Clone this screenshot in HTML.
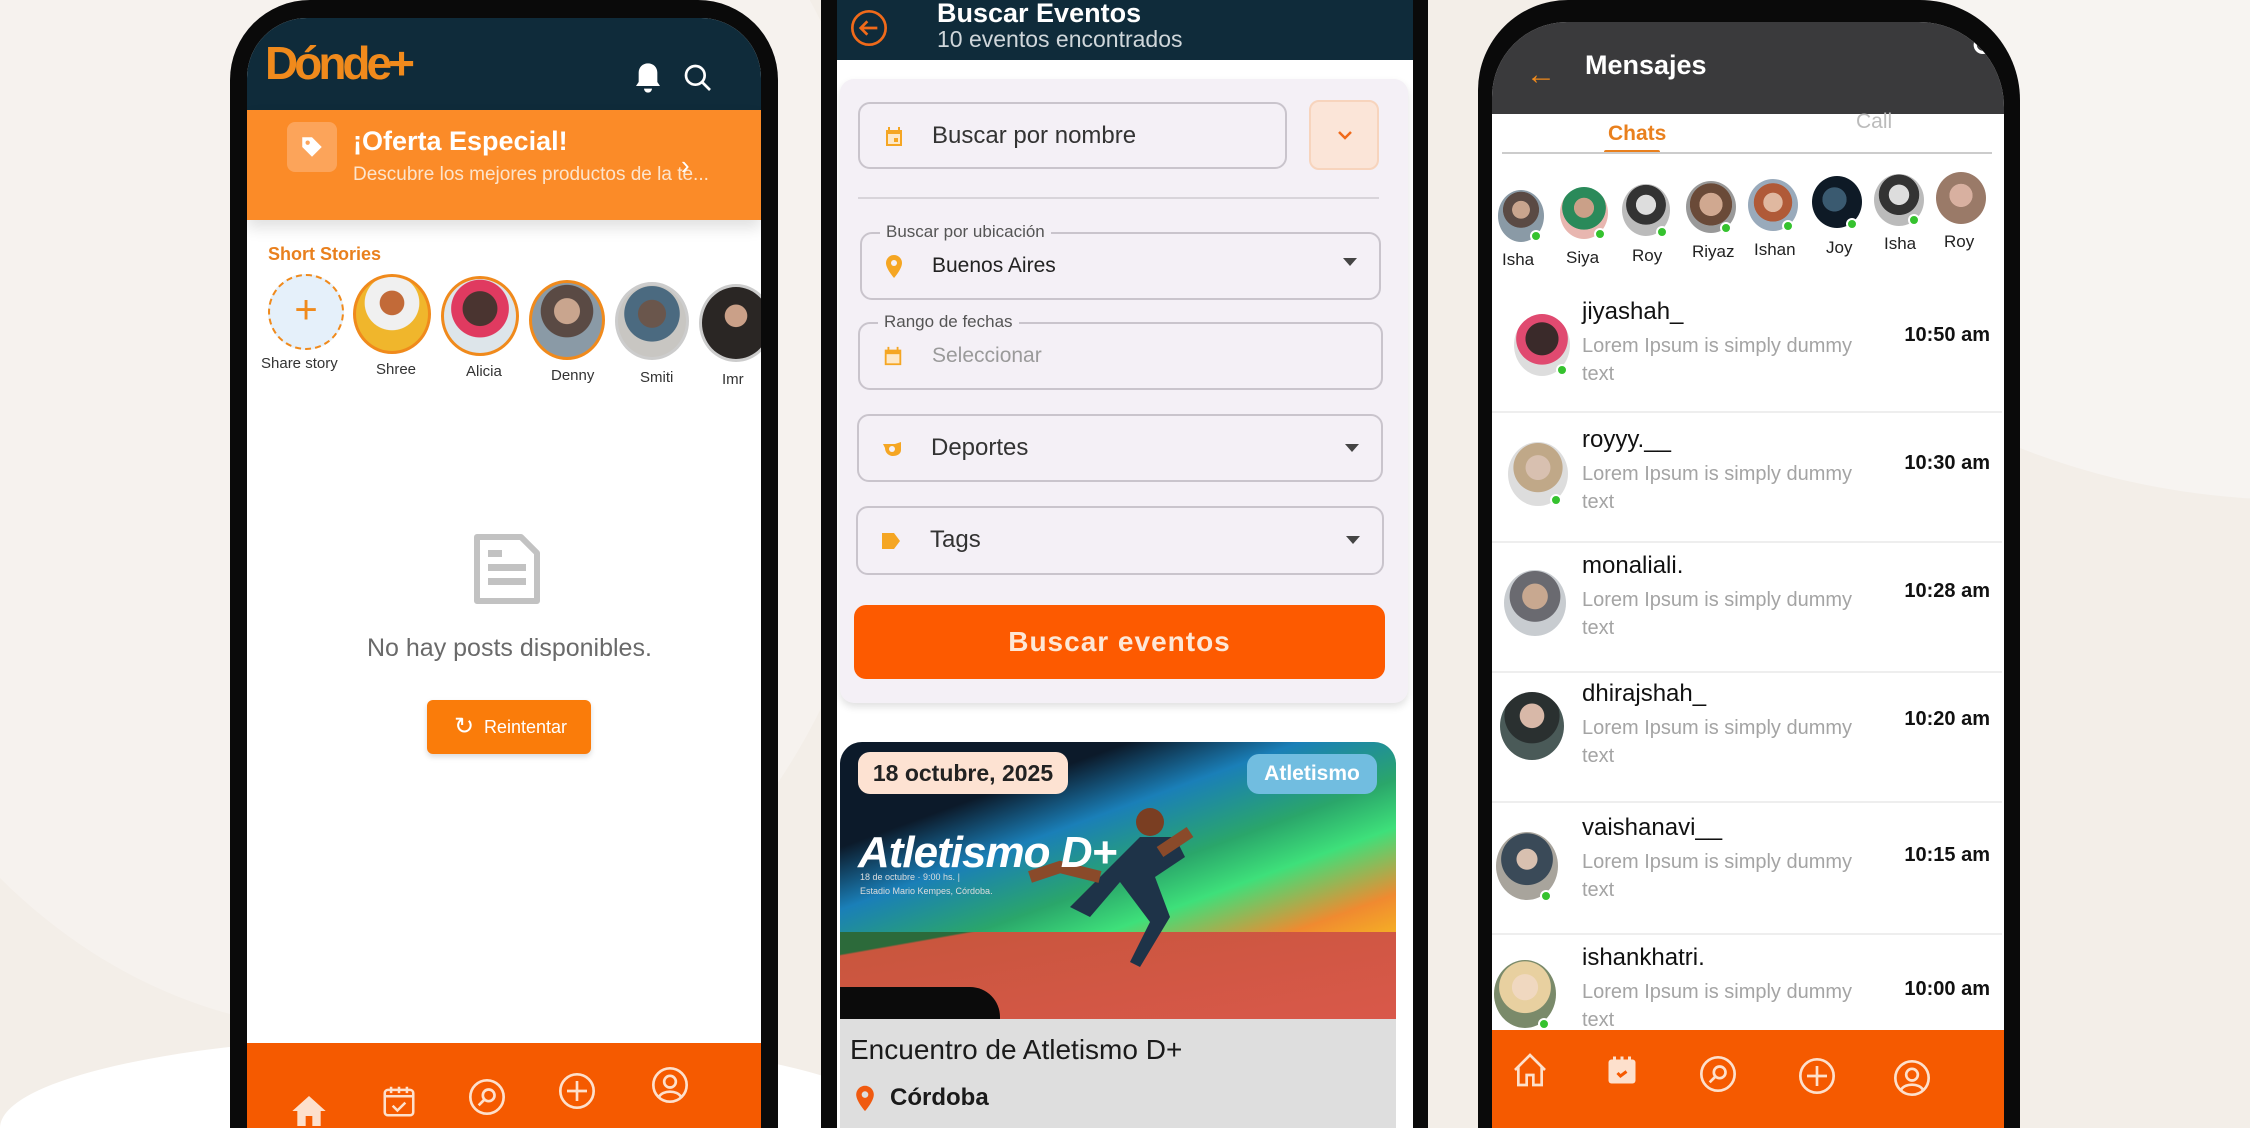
<!DOCTYPE html>
<html><head><meta charset="utf-8">
<style>
*{margin:0;padding:0;box-sizing:border-box}
html,body{width:2250px;height:1128px;overflow:hidden}
body{font-family:"Liberation Sans",sans-serif;background:#f3eee8}
#w{position:relative;width:2250px;height:1128px;overflow:hidden;background:#f3eee8}
.a{position:absolute}
.bg1{left:-200px;top:-300px;width:1100px;height:1330px;border-radius:50%;background:#f6f2ee}
.bg1c{left:0;top:0;width:900px;height:1030px;overflow:hidden}
.bg2{left:0;top:1035px;width:900px;height:93px;background:#fff;border-radius:50% 50% 0 0/100% 100% 0 0}
.bg3w{left:1700px;top:0;width:550px;height:500px;overflow:hidden}
.bg3{left:0;top:-400px;width:1200px;height:900px;border-radius:50%;background:#f7f4f1}
.frame{background:#0a0a0a}
.scr{background:#fff;overflow:hidden}
.av{border-radius:50%;background:radial-gradient(circle at 50% 38%,#c9a58e 0 22%,#5a4a44 23% 45%,#8a9aa6 46%)}
.dot{position:absolute;width:12px;height:12px;border-radius:50%;background:#35c22e;border:2px solid #fff}
.fld{position:absolute;border:2px solid #c9c4cc;border-radius:12px}
.lbl{position:absolute;top:-12px;left:18px;background:#f4f0f6;padding:0 6px;font-size:17px;color:#555}
.chat{position:absolute;left:0;width:510px;height:129px;border-bottom:2px solid #eee}
.cn{position:absolute;left:90px;font-size:24px;color:#111}
.cm{position:absolute;left:90px;font-size:20px;color:#a4a4a4;line-height:28px;width:300px}
.ct{position:absolute;right:12px;font-size:20px;font-weight:bold;color:#111}
.nav svg{position:absolute}
</style></head><body><div id="w">
<div class="a bg1c"><div class="a bg1"></div></div><div class="a bg3w"><div class="a bg3"></div></div><div class="a bg2"></div>

<!-- PHONE 1 -->
<div class="a frame" style="left:230px;top:0;width:548px;height:1128px;border-radius:80px 80px 0 0"></div>
<div class="a scr" style="left:247px;top:18px;width:514px;height:1110px;border-radius:60px 60px 0 0">
  <div class="a" style="left:0;top:0;width:514px;height:92px;background:#0f2b3a"></div>
  <div class="a" style="left:18px;top:18px;font-size:46px;font-weight:bold;color:#f08a1c;letter-spacing:-4px">Dónde+</div>
  <svg class="a" style="left:385px;top:42px" width="32" height="36" viewBox="0 0 24 26"><path d="M12 2c-4 0-7 3-7 7v7l-2 3h18l-2-3V9c0-4-3-7-7-7zM9 21a3 3 0 006 0z" fill="#fff"/></svg>
  <svg class="a" style="left:435px;top:44px" width="32" height="32" viewBox="0 0 24 24"><circle cx="10" cy="10" r="7" fill="none" stroke="#fff" stroke-width="2"/><path d="M15 15l6 6" stroke="#fff" stroke-width="2"/></svg>
  <div class="a" style="left:0;top:92px;width:514px;height:110px;background:#fb8b28;box-shadow:0 8px 14px rgba(0,0,0,.12)"></div>
  <div class="a" style="left:40px;top:104px;width:50px;height:50px;border-radius:8px;background:#fca45a"></div>
  <svg class="a" style="left:52px;top:116px" width="26" height="26" viewBox="0 0 24 24"><path d="M3 3h9l9 9-9 9-9-9z" fill="#fff"/><circle cx="8" cy="8" r="2" fill="#fca45a"/></svg>
  <div class="a" style="left:106px;top:108px;font-size:27px;font-weight:bold;color:#fff">¡Oferta Especial!</div>
  <div class="a" style="left:106px;top:146px;font-size:19px;color:#fde4cc;white-space:nowrap">Descubre los mejores productos de la te...</div>
  <div class="a" style="left:434px;top:132px;font-size:26px;color:#fff">›</div>
  <div class="a" style="left:21px;top:226px;font-size:18px;font-weight:bold;color:#e9801e">Short Stories</div>
  <div class="a" style="left:21px;top:256px;width:76px;height:76px;border-radius:50%;background:#e5f0fa;border:2px dashed #f08a1c;color:#f08a1c;font-size:40px;text-align:center;line-height:68px">+</div>
  <div class="a" style="left:14px;top:337px;font-size:15px;color:#333">Share story</div>
  <div class="a av" style="left:106px;top:256px;width:78px;height:80px;border:3px solid #f08a1c;background:radial-gradient(circle at 50% 35%,#c26a38 0 20%,#f0f0f0 21% 45%,#f0b62c 46%)"></div>
  <div class="a" style="left:129px;top:343px;font-size:15px;color:#333">Shree</div>
  <div class="a av" style="left:194px;top:258px;width:78px;height:80px;border:3px solid #f08a1c;background:radial-gradient(circle at 50% 40%,#4a3430 0 30%,#e03a60 31% 50%,#dde5ea 51%)"></div>
  <div class="a" style="left:219px;top:345px;font-size:15px;color:#333">Alicia</div>
  <div class="a av" style="left:282px;top:262px;width:76px;height:80px;border:3px solid #f08a1c"></div>
  <div class="a" style="left:304px;top:349px;font-size:15px;color:#333">Denny</div>
  <div class="a av" style="left:368px;top:264px;width:74px;height:78px;border:3px solid #ccc;background:radial-gradient(circle at 50% 40%,#6a564c 0 25%,#4b6a80 26% 50%,#c8c6c2 51%)"></div>
  <div class="a" style="left:393px;top:351px;font-size:15px;color:#333">Smiti</div>
  <div class="a av" style="left:452px;top:266px;width:74px;height:78px;border:3px solid #ccc;background:radial-gradient(circle at 50% 40%,#caa088 0 20%,#2a2624 21%)"></div>
  <div class="a" style="left:475px;top:353px;font-size:15px;color:#333">Imr</div>
  <svg class="a" style="left:227px;top:516px" width="66" height="70" viewBox="0 0 66 70"><path d="M3 3h44l16 16v48H3z" fill="none" stroke="#c2c2c2" stroke-width="6" stroke-linejoin="round"/><rect x="14" y="16" width="14" height="7" fill="#c2c2c2"/><rect x="14" y="30" width="38" height="7" fill="#c2c2c2"/><rect x="14" y="44" width="38" height="7" fill="#c2c2c2"/></svg>
  <div class="a" style="left:120px;top:616px;font-size:25px;color:#6a6a6a">No hay posts disponibles.</div>
  <div class="a" style="left:180px;top:682px;width:164px;height:54px;border-radius:6px;background:#fa7c0a;color:#fff;font-size:18px;line-height:54px;text-align:right;padding-right:24px;box-shadow:0 3px 6px rgba(0,0,0,.15)">Reintentar</div>
  <div class="a" style="left:207px;top:694px;font-size:24px;color:#fff">↻</div>
  <div class="a nav" style="left:0;top:1025px;width:514px;height:85px;background:#f55a00">
    <svg style="left:42px;top:48px" width="40" height="40" viewBox="0 0 24 24"><path d="M12 3L2 12h3v9h5v-6h4v6h5v-9h3z" fill="#fde0cc"/></svg>
    <svg style="left:133px;top:38px" width="38" height="40" viewBox="0 0 24 24" fill="none" stroke="#fde0cc" stroke-width="1.6"><rect x="3" y="5" width="18" height="16" rx="2"/><path d="M3 9h18M7 3v4M12 3v4M17 3v4M8 15l3 3 5-5"/></svg>
    <svg style="left:220px;top:34px" width="40" height="40" viewBox="0 0 24 24" fill="none" stroke="#fde0cc" stroke-width="1.6"><circle cx="12" cy="12" r="10"/><circle cx="13" cy="11" r="3.5"/><path d="M10.5 13.5L7 17"/></svg>
    <svg style="left:310px;top:28px" width="40" height="40" viewBox="0 0 24 24" fill="none" stroke="#fde0cc" stroke-width="1.6"><circle cx="12" cy="12" r="10"/><path d="M12 6v12M6 12h12"/></svg>
    <svg style="left:403px;top:22px" width="40" height="40" viewBox="0 0 24 24" fill="none" stroke="#fde0cc" stroke-width="1.6"><circle cx="12" cy="12" r="10"/><circle cx="12" cy="10" r="3.5"/><path d="M5.5 19c2-4 11-4 13 0"/></svg>
  </div>
</div>

<!-- PHONE 2 -->
<div class="a frame" style="left:821px;top:0;width:607px;height:1128px"></div>
<div class="a scr" style="left:837px;top:0;width:576px;height:1128px;background:#fff">
 <div class="a" style="left:0;top:-40px;width:576px;height:1168px">
  <div class="a" style="left:0;top:0;width:576px;height:100px;background:#0f2b3a"></div>
  <svg class="a" style="left:12px;top:48px" width="40" height="40" viewBox="0 0 24 24" fill="none" stroke="#f06a1a" stroke-width="1.6"><circle cx="12" cy="12" r="10"/><path d="M17 12H7M11 8l-4 4 4 4"/></svg>
  <div class="a" style="left:100px;top:38px;font-size:27px;font-weight:bold;color:#fff">Buscar Eventos</div>
  <div class="a" style="left:100px;top:66px;font-size:23px;color:#cfd6da">10 eventos encontrados</div>
  <div class="a" style="left:3px;top:119px;width:568px;height:624px;border-radius:14px;background:#f4f0f6;box-shadow:0 4px 8px rgba(0,0,0,.12)">
    <div class="fld" style="left:18px;top:23px;width:429px;height:67px"><svg class="a" style="left:22px;top:20px" width="24" height="26" viewBox="0 0 24 24"><path d="M4 5h16v16H4z" fill="#f5a623"/><rect x="6" y="9" width="12" height="10" fill="#fde8c8"/><rect x="12" y="13" width="4" height="4" fill="#f5a623"/><path d="M7 2v4M17 2v4" stroke="#f5a623" stroke-width="2"/></svg><div class="a" style="left:72px;top:18px;font-size:24px;color:#333">Buscar por nombre</div></div>
    <div class="a" style="left:469px;top:21px;width:70px;height:70px;border-radius:10px;background:#fbe5d8;border:2px solid #f7d4bd"><svg class="a" style="left:24px;top:26px" width="20" height="14" viewBox="0 0 20 14"><path d="M4 4l6 6 6-6" fill="none" stroke="#f06a1a" stroke-width="2.5"/></svg></div>
    <div class="a" style="left:18px;top:118px;width:521px;height:2px;background:#d8d4da"></div>
    <div class="fld" style="left:20px;top:153px;width:521px;height:68px"><div class="lbl">Buscar por ubicación</div><svg class="a" style="left:22px;top:20px" width="20" height="26" viewBox="0 0 20 26"><path d="M10 1a8 8 0 00-8 8c0 6 8 15 8 15s8-9 8-15a8 8 0 00-8-8z" fill="#f5a623"/><circle cx="10" cy="9" r="3" fill="#f4f0f6"/></svg><div class="a" style="left:70px;top:20px;font-size:21px;color:#222">Buenos Aires</div><div class="a" style="right:22px;top:24px;border:7px solid transparent;border-top:8px solid #444"></div></div>
    <div class="fld" style="left:18px;top:243px;width:525px;height:68px"><div class="lbl">Rango de fechas</div><svg class="a" style="left:22px;top:20px" width="22" height="24" viewBox="0 0 24 24"><path d="M3 5h18v17H3z" fill="#f5a623"/><rect x="5" y="10" width="14" height="10" fill="#fde8c8"/><path d="M7 2v4M17 2v4" stroke="#f5a623" stroke-width="2"/></svg><div class="a" style="left:72px;top:20px;font-size:21px;color:#9a9a9a">Seleccionar</div></div>
    <div class="fld" style="left:17px;top:335px;width:526px;height:68px"><svg class="a" style="left:22px;top:24px" width="24" height="18" viewBox="0 0 24 18"><path d="M2 4h12l6-2v8c0 4-4 6-8 6-5 0-8-4-8-8z" fill="#f5a623"/><circle cx="11" cy="9" r="3" fill="#f4f0f6"/></svg><div class="a" style="left:72px;top:18px;font-size:24px;color:#333">Deportes</div><div class="a" style="right:22px;top:28px;border:7px solid transparent;border-top:8px solid #444"></div></div>
    <div class="fld" style="left:16px;top:427px;width:528px;height:69px"><svg class="a" style="left:22px;top:22px" width="22" height="22" viewBox="0 0 22 22"><path d="M2 3h12l6 8-6 8H2z" fill="#f5a623"/></svg><div class="a" style="left:72px;top:18px;font-size:24px;color:#333">Tags</div><div class="a" style="right:22px;top:28px;border:7px solid transparent;border-top:8px solid #444"></div></div>
    <div class="a" style="left:14px;top:526px;width:531px;height:74px;border-radius:12px;background:#fd5a00;color:#fde7d6;font-size:28px;font-weight:bold;text-align:center;line-height:74px;letter-spacing:1px">Buscar eventos</div>
  </div>
  <div class="a" style="left:3px;top:782px;width:556px;height:386px;border-radius:22px 22px 0 0;overflow:hidden;background:#dedede">
    <div class="a" style="left:0;top:0;width:556px;height:277px;background:linear-gradient(160deg,#0c1a2a 0%,#0c1a2a 22%,#1a7fb8 35%,#2aa66a 50%,#3ee07a 60%,#f08a30 74%,#f7c020 86%)"></div>
    <div class="a" style="left:0;top:190px;width:556px;height:87px;background:linear-gradient(170deg,#2c6a3a 0 12%,#c9563e 13%,#d9584a 100%)"></div>
    <div class="a" style="left:0;top:245px;width:160px;height:32px;background:#0b0b0b;border-radius:0 30px 0 0"></div>
    <svg class="a" style="left:160px;top:50px" width="220" height="200" viewBox="0 0 220 200"><circle cx="150" cy="30" r="14" fill="#7a3e22"/><path d="M140 45l-40 40-30 30 20 10 30-35 30 40-20 40 10 5 30-50-15-40 30-20-10-20z" fill="#1e3348"/><path d="M100 85l-40-10-30 10M160 60l30-20" stroke="#8a4a2a" stroke-width="12" fill="none"/></svg>
    <div class="a" style="left:20px;top:128px;font-size:9px;color:#ddd;line-height:14px">18 de octubre · 9:00 hs. |<br>Estadio Mario Kempes, Córdoba.</div>
    <div class="a" style="left:18px;top:86px;font-size:44px;font-weight:bold;font-style:italic;color:#fff;letter-spacing:-1px">Atletismo D+</div>
    <div class="a" style="left:18px;top:10px;width:210px;height:42px;border-radius:12px;background:#fde2d2;font-size:23px;font-weight:bold;color:#222;line-height:42px;text-align:center">18 octubre, 2025</div>
    <div class="a" style="left:407px;top:12px;width:130px;height:40px;border-radius:12px;background:#71bde0;font-size:21px;font-weight:bold;color:#fff;line-height:40px;text-align:center">Atletismo</div>
    <div class="a" style="left:10px;top:292px;font-size:28px;color:#1a1a1a">Encuentro de Atletismo D+</div>
    <svg class="a" style="left:14px;top:342px" width="22" height="30" viewBox="0 0 20 26"><path d="M10 1a8 8 0 00-8 8c0 6 8 15 8 15s8-9 8-15a8 8 0 00-8-8z" fill="#f05a10"/><circle cx="10" cy="9" r="3" fill="#dedede"/></svg>
    <div class="a" style="left:50px;top:342px;font-size:24px;font-weight:bold;color:#1a1a1a">Córdoba</div>
  </div>
 </div>
</div>

<!-- PHONE 3 -->
<div class="a frame" style="left:1478px;top:0;width:542px;height:1128px;border-radius:90px 100px 0 0"></div>
<div class="a scr" style="left:1492px;top:22px;width:512px;height:1106px;border-radius:75px 85px 0 0">
  <div class="a" style="left:0;top:0;width:512px;height:92px;background:#3a3a3c"></div>
  <div class="a" style="left:34px;top:36px;font-size:30px;color:#f08a1c">←</div>
  <div class="a" style="left:93px;top:28px;font-size:27px;font-weight:bold;color:#fff">Mensajes</div>
  <svg class="a" style="left:480px;top:12px" width="26" height="26" viewBox="0 0 24 24"><circle cx="10" cy="10" r="7" fill="none" stroke="#fff" stroke-width="3"/></svg>
  <div class="a" style="left:116px;top:100px;font-size:21px;font-weight:bold;color:#e9801e">Chats</div>
  <div class="a" style="left:112px;top:128px;width:56px;height:4px;border-radius:2px;background:#e9801e"></div>
  <div class="a" style="left:364px;top:88px;font-size:21px;color:#bbb">Call</div>
  <div class="a" style="left:10px;top:130px;width:490px;height:2px;background:#ccc"></div>
  <div class="a av" style="left:6px;top:168px;width:46px;height:52px"></div><div class="dot" style="left:38px;top:208px"></div><div class="a" style="left:10px;top:228px;font-size:17px;color:#222">Isha</div>
  <div class="a av" style="left:68px;top:165px;width:48px;height:52px;background:radial-gradient(circle at 50% 40%,#caa088 0 25%,#2a8a5a 26% 55%,#e8b6b0 56%)"></div><div class="dot" style="left:102px;top:206px"></div><div class="a" style="left:74px;top:226px;font-size:17px;color:#222">Siya</div>
  <div class="a av" style="left:130px;top:162px;width:48px;height:52px;background:radial-gradient(circle at 50% 40%,#ddd 0 25%,#333 26% 50%,#bbb 51%)"></div><div class="dot" style="left:164px;top:204px"></div><div class="a" style="left:140px;top:224px;font-size:17px;color:#222">Roy</div>
  <div class="a av" style="left:194px;top:159px;width:50px;height:52px;background:radial-gradient(circle at 50% 45%,#d0a890 0 30%,#6a4a38 31% 55%,#999 56%)"></div><div class="dot" style="left:228px;top:200px"></div><div class="a" style="left:200px;top:220px;font-size:17px;color:#222">Riyaz</div>
  <div class="a av" style="left:256px;top:157px;width:50px;height:52px;background:radial-gradient(circle at 50% 45%,#e0b8a0 0 25%,#b05a38 26% 50%,#9ab 51%)"></div><div class="dot" style="left:290px;top:198px"></div><div class="a" style="left:262px;top:218px;font-size:17px;color:#222">Ishan</div>
  <div class="a av" style="left:320px;top:154px;width:50px;height:52px;background:radial-gradient(circle at 45% 45%,#3a5a70 0 30%,#0e1a26 31%)"></div><div class="dot" style="left:354px;top:196px"></div><div class="a" style="left:334px;top:216px;font-size:17px;color:#222">Joy</div>
  <div class="a av" style="left:382px;top:152px;width:50px;height:52px;background:radial-gradient(circle at 50% 40%,#ddd 0 25%,#333 26% 50%,#bbb 51%)"></div><div class="dot" style="left:416px;top:192px"></div><div class="a" style="left:392px;top:212px;font-size:17px;color:#222">Isha</div>
  <div class="a av" style="left:444px;top:150px;width:50px;height:52px;background:radial-gradient(circle at 50% 45%,#d8b0a0 0 30%,#9a7a68 31%)"></div><div class="a" style="left:452px;top:210px;font-size:17px;color:#222">Roy</div>

  <div class="chat" style="top:262px"><div class="a av" style="left:22px;top:30px;width:56px;height:62px;background:radial-gradient(circle at 50% 40%,#3a2a2a 0 35%,#e04a70 36% 55%,#ddd 56%)"></div><div class="dot" style="left:64px;top:80px"></div><div class="cn" style="top:14px">jiyashah_</div><div class="cm" style="top:48px">Lorem Ipsum is simply dummy text</div><div class="ct" style="top:40px">10:50 am</div></div>
  <div class="chat" style="top:392px"><div class="a av" style="left:16px;top:28px;width:60px;height:64px;background:radial-gradient(circle at 50% 40%,#d8c0b0 0 25%,#c0a888 26% 50%,#ddd 51%)"></div><div class="dot" style="left:58px;top:80px"></div><div class="cn" style="top:12px">royyy.__</div><div class="cm" style="top:46px">Lorem Ipsum is simply dummy text</div><div class="ct" style="top:38px">10:30 am</div></div>
  <div class="chat" style="top:522px"><div class="a av" style="left:12px;top:26px;width:62px;height:66px;background:radial-gradient(circle at 50% 40%,#c8a890 0 25%,#6a6a70 26% 50%,#c8ccd0 51%)"></div><div class="cn" style="top:8px">monaliali.</div><div class="cm" style="top:42px">Lorem Ipsum is simply dummy text</div><div class="ct" style="top:36px">10:28 am</div></div>
  <div class="chat" style="top:652px"><div class="a av" style="left:8px;top:18px;width:64px;height:68px;background:radial-gradient(circle at 50% 35%,#d8b8a8 0 22%,#2a3030 23% 50%,#4a5a58 51%)"></div><div class="cn" style="top:6px">dhirajshah_</div><div class="cm" style="top:40px">Lorem Ipsum is simply dummy text</div><div class="ct" style="top:34px">10:20 am</div></div>
  <div class="chat" style="top:784px"><div class="a av" style="left:4px;top:26px;width:62px;height:68px;background:radial-gradient(circle at 50% 40%,#d8c0b0 0 20%,#3a4a58 21% 50%,#a8a49c 51%)"></div><div class="dot" style="left:48px;top:84px"></div><div class="cn" style="top:8px">vaishanavi__</div><div class="cm" style="top:42px">Lorem Ipsum is simply dummy text</div><div class="ct" style="top:38px">10:15 am</div></div>
  <div class="chat" style="top:916px;height:92px;border:0"><div class="a av" style="left:2px;top:22px;width:62px;height:68px;background:radial-gradient(circle at 50% 40%,#f0d8c0 0 25%,#e8d0a0 26% 50%,#7a8a6a 51%)"></div><div class="dot" style="left:46px;top:80px"></div><div class="cn" style="top:6px">ishankhatri.</div><div class="cm" style="top:40px">Lorem Ipsum is simply dummy text</div><div class="ct" style="top:40px">10:00 am</div></div>

  <div class="a nav" style="left:0;top:1008px;width:512px;height:98px;background:#f55a00">
    <svg style="left:18px;top:20px" width="40" height="40" viewBox="0 0 24 24" fill="none" stroke="#fde0cc" stroke-width="1.6"><path d="M3 12l9-9 9 9M5 10v11h5v-6h4v6h5V10"/></svg>
    <svg style="left:112px;top:20px" width="36" height="40" viewBox="0 0 24 24"><rect x="3" y="5" width="18" height="16" rx="2" fill="#fde0cc"/><path d="M7 3v4M12 3v4M17 3v4" stroke="#fde0cc" stroke-width="2"/><path d="M9 14l2 2 4-3" stroke="#f55a00" stroke-width="2" fill="none"/></svg>
    <svg style="left:206px;top:24px" width="40" height="40" viewBox="0 0 24 24" fill="none" stroke="#fde0cc" stroke-width="1.6"><circle cx="12" cy="12" r="10"/><circle cx="13" cy="11" r="3.5"/><path d="M10.5 13.5L7 17"/></svg>
    <svg style="left:305px;top:26px" width="40" height="40" viewBox="0 0 24 24" fill="none" stroke="#fde0cc" stroke-width="1.6"><circle cx="12" cy="12" r="10"/><path d="M12 6v12M6 12h12"/></svg>
    <svg style="left:400px;top:28px" width="40" height="40" viewBox="0 0 24 24" fill="none" stroke="#fde0cc" stroke-width="1.6"><circle cx="12" cy="12" r="10"/><circle cx="12" cy="10" r="3.5"/><path d="M5.5 19c2-4 11-4 13 0"/></svg>
  </div>
</div>
</div></body></html>
